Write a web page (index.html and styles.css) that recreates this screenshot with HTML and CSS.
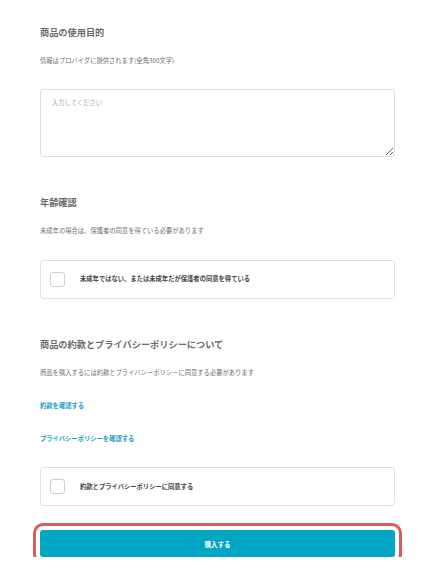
FILE: index.html
```html
<!DOCTYPE html>
<html lang="ja">

<head>
    <meta charset="UTF-8">
    <title>購入フォーム</title>
    <link rel="stylesheet" href="styles.css">
</head>

<body>
    <form class="order" action="" method="get" name="frm">
        <section class="block">
            <h2 class="block-title">商品の使用目的</h2>
            <p class="block-note">情報はプロバイダに提供されます(全角300文字)</p>
            <textarea class="field-area" name="purpose" placeholder="入力してください"></textarea>
        </section>

        <section class="block">
            <h2 class="block-title">年齢確認</h2>
            <p class="block-note">未成年の場合は、保護者の同意を得ている必要があります</p>
            <label class="check-card">
                <input class="check-box" type="checkbox" name="age">
                <span class="check-text">未成年ではない、または未成年だが保護者の同意を得ている</span>
            </label>
        </section>

        <section class="block">
            <h2 class="block-title">商品の約款とプライバシーポリシーについて</h2>
            <p class="block-note">商品を購入するには約款とプライバシーポリシーに同意する必要があります</p>
            <a class="doc-link" href="#">約款を確認する</a>
            <a class="doc-link" href="#">プライバシーポリシーを確認する</a>
            <label class="check-card">
                <input class="check-box" type="checkbox" name="agree">
                <span class="check-text">約款とプライバシーポリシーに同意する</span>
            </label>
        </section>

        <button class="buy-btn" type="submit">購入する</button>
    </form>
</body>

</html>
```

FILE: styles.css
```css
* {
    margin: 0;
    padding: 0;
    box-sizing: border-box;
}

body {
    background: #fff;
    font-family: "Noto Sans CJK JP", "Noto Sans", sans-serif;
    color: #555;
}

.order {
    width: 355px;
    margin-left: 40px;
    padding-top: 25.5px;
}

.block {
    margin-bottom: 39px;
}

.block-title {
    font-size: 9.2px;
    line-height: 12px;
    font-weight: bold;
    color: #6b6b6b;
    margin-bottom: 18px;
}

.block-note {
    font-size: 6.3px;
    line-height: 10px;
    color: #6f6f6f;
    margin-bottom: 23.5px;
}

.field-area {
    display: block;
    width: 355px;
    height: 68px;
    border: 1px solid #dedede;
    border-radius: 3px;
    padding: 8px 11px;
    font-family: inherit;
    font-size: 6.3px;
    line-height: 10px;
    color: #444;
    resize: vertical;
    outline: none;
}

.field-area::placeholder {
    color: #a8a8a8;
}

.check-card {
    display: flex;
    align-items: center;
    gap: 15px;
    height: 39px;
    border: 1px solid #e2e2e2;
    border-radius: 3px;
    padding-left: 9px;
}

.check-box {
    appearance: none;
    width: 15px;
    height: 15px;
    border: 1.5px solid #cfcfcf;
    border-radius: 3px;
    background: #fff;
}

.check-text {
    font-size: 6.3px;
    line-height: 10px;
    font-weight: bold;
    color: #444;
}

.doc-link {
    display: block;
    font-size: 6.3px;
    line-height: 10px;
    font-weight: bold;
    color: #1b9fc0;
    text-decoration: none;
    margin-bottom: 23px;
}

.block:last-of-type {
    margin-bottom: 24px;
}

.buy-btn {
    display: block;
    width: 355px;
    height: 27px;
    border: none;
    border-radius: 3px;
    background: #00a6c4;
    color: #fff;
    font-family: inherit;
    font-size: 6.5px;
    font-weight: bold;
    outline: 3px solid #dc5a5a;
    outline-offset: 4px;
}
```
